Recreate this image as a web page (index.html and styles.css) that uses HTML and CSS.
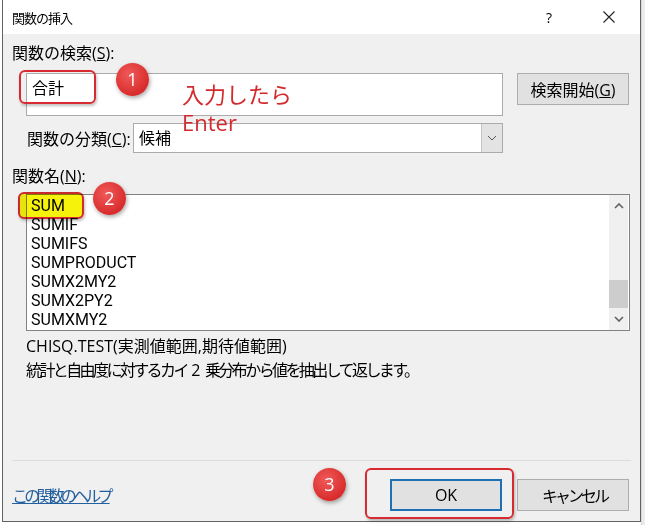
FILE: index.html
```html
<!DOCTYPE html>
<html lang="ja">

<head>
  <meta charset="UTF-8">
  <meta name="viewport" content="width=device-width, initial-scale=1.0">
  <title>関数の挿入</title>
  <link rel="stylesheet" href="styles.css">
</head>

<body>
  <div class="desktop">
    <div class="dialog">
      <div class="titlebar">
        <span class="title">関数の挿入</span>
        <span class="title-btn">?</span>
        <span class="title-btn close">
          <svg width="14" height="14" viewBox="0 0 14 14"><path d="M1.5 1.5L12.5 12.5M12.5 1.5L1.5 12.5" stroke="#222" stroke-width="1.1" fill="none"/></svg>
        </span>
      </div>

      <div class="content">
        <div class="label">関数の検索(<u>S</u>):</div>
        <div class="search-row">
          <div class="textbox">合計</div>
          <button class="btn">検索開始(<u>G</u>)</button>
        </div>

        <div class="category-row">
          <span class="category-label">関数の分類(<u>C</u>):</span>
          <div class="select">
            <span class="select-value">候補</span>
            <span class="select-drop">
              <svg width="10" height="6" viewBox="0 0 10 6"><path d="M1 1L5 5L9 1" stroke="#555" stroke-width="1" fill="none"/></svg>
            </span>
          </div>
        </div>

        <div class="label label-names">関数名(<u>N</u>):</div>
        <div class="listbox">
          <ul class="items">
            <li>SUM</li>
            <li>SUMIF</li>
            <li>SUMIFS</li>
            <li>SUMPRODUCT</li>
            <li>SUMX2MY2</li>
            <li>SUMX2PY2</li>
            <li>SUMXMY2</li>
          </ul>
          <div class="scrollbar">
            <span class="sb-arrow">
              <svg width="10" height="6" viewBox="0 0 10 6"><path d="M1 5L5 1L9 5" stroke="#606060" stroke-width="1.6" fill="none"/></svg>
            </span>
            <div class="sb-track"><div class="sb-thumb"></div></div>
            <span class="sb-arrow">
              <svg width="10" height="6" viewBox="0 0 10 6"><path d="M1 1L5 5L9 1" stroke="#606060" stroke-width="1.6" fill="none"/></svg>
            </span>
          </div>
        </div>

        <div class="desc">
          <p>CHISQ.TEST(実測値範囲,期待値範囲)</p>
          <p class="desc-text">統計と自由度に対するカイ <span class="num">2</span> 乗分布から値を抽出して返します。</p>
        </div>

        <div class="footer">
          <a class="help-link" href="#">この関数のヘルプ</a>
          <button class="btn btn-default">OK</button>
          <button class="btn btn-cancel">キャンセル</button>
        </div>
      </div>
    </div>

    <!-- annotations drawn on top of the screenshot -->
    <div class="mark mark-1"></div>
    <div class="badge badge-1">1</div>
    <div class="note">入力したら<br>Enter</div>
    <div class="mark mark-2"></div>
    <div class="badge badge-2">2</div>
    <div class="badge badge-3">3</div>
    <div class="mark mark-3"></div>
  </div>
</body>

</html>
```

FILE: styles.css
```css
* {
  margin: 0;
  padding: 0;
  box-sizing: border-box;
}

body {
  font-family: "Open Sans", "Noto Sans CJK JP", sans-serif;
  font-size: 16px;
  color: #000;
  background: #f4f4f4;
}

.desktop {
  position: relative;
  width: 645px;
  height: 525px;
  overflow: hidden;
  background: linear-gradient(to right, #fff 641px, #d6d6d6 641px, #d6d6d6 642px, #ececec 642px);
}

.dialog {
  margin-left: 2px;
  width: 639px;
  height: 522px;
  display: flex;
  flex-direction: column;
  background: #f0f0f0;
  border: 1px solid #626262;
  border-top: none;
}

.titlebar {
  height: 34px;
  flex-shrink: 0;
  display: flex;
  align-items: center;
  padding-left: 9px;
  background: #fff;
}

.title {
  flex: 1;
  font-size: 13px;
  letter-spacing: -1px;
}

.title-btn {
  width: 30px;
  text-align: center;
  font-size: 14px;
}

.title-btn + .title-btn {
  margin-left: 30px;
}

.close {
  display: flex;
  justify-content: center;
  margin-right: 16px;
}

.content {
  flex: 1;
  display: flex;
  flex-direction: column;
  padding: 9px 11px 0 9px;
}

.label {
  line-height: 20px;
}

.label-names {
  margin-top: 13px;
}

.search-row {
  display: flex;
  align-items: flex-start;
  gap: 14px;
  margin: 10px 0 0 14px;
}

.textbox {
  width: 477px;
  height: 43px;
  padding: 4px 5px;
  line-height: 20px;
  background: #fff;
  border: 1px solid #ababab;
}

.btn {
  width: 112px;
  height: 32px;
  font: inherit;
  color: #000;
  background: #e1e1e1;
  border: 1px solid #adadad;
}

.btn-default {
  border: 2px solid #1f6fb4;
}

.btn-cancel {
  letter-spacing: -3px;
  padding-left: 3px;
}

.category-row {
  display: flex;
  align-items: center;
  margin-top: 7px;
}

.category-label {
  width: 121px;
  padding-left: 15px;
}

.select {
  width: 370px;
  height: 30px;
  display: flex;
  background: #fff;
  border: 1px solid #ababab;
}

.select-value {
  flex: 1;
  padding-left: 5px;
  line-height: 28px;
}

.select-drop {
  width: 21px;
  display: flex;
  align-items: center;
  justify-content: center;
  background: #e3e3e3;
  border-left: 1px solid #c4c4c4;
}

.listbox {
  width: 604px;
  height: 137px;
  display: flex;
  margin: 8px 0 0 14px;
  background: #fff;
  border: 1px solid #828282;
}

.items {
  flex: 1;
  list-style: none;
  padding: 1px 0 0 4px;
  font-family: Roboto, sans-serif;
  line-height: 19px;
  overflow: hidden;
}

.scrollbar {
  width: 19px;
  margin-right: 1px;
  display: flex;
  flex-direction: column;
  background: #f0f0f0;
}

.sb-arrow {
  height: 22px;
  display: flex;
  align-items: center;
  justify-content: center;
}

.sb-track {
  flex: 1;
  display: flex;
  flex-direction: column;
  justify-content: flex-end;
}

.sb-thumb {
  height: 28px;
  background: #cdcdcd;
}

.desc {
  margin: 3px 0 0 14px;
  line-height: 24px;
}

.desc-text {
  letter-spacing: -2.6px;
}

.num {
  letter-spacing: 0;
  padding: 0 3px;
}

.footer {
  margin-top: auto;
  margin-right: -2px;
  padding: 18px 2px 10px 0;
  display: flex;
  align-items: center;
  gap: 15px;
  border-top: 1px solid #dcdcdc;
}

.help-link {
  margin-right: auto;
  color: #23609f;
  text-decoration: underline;
  letter-spacing: -3.8px;
}

/* red annotations */
.mark {
  position: absolute;
  border: 2px solid #d72b31;
  border-radius: 6px;
  box-shadow: 1px 2px 3px rgba(0, 0, 0, 0.25);
}

.mark-1 {
  left: 19px;
  top: 70px;
  width: 77px;
  height: 34px;
}

.mark-2 {
  left: 18px;
  top: 192px;
  width: 66px;
  height: 27px;
  background: #f7f20c;
  mix-blend-mode: multiply;
}

.mark-3 {
  left: 365px;
  top: 468px;
  width: 149px;
  height: 51px;
}

.badge {
  position: absolute;
  width: 33px;
  height: 33px;
  border-radius: 50%;
  background: radial-gradient(circle at 40% 35%, #f05a5a, #d92c2c 70%, #c42222);
  box-shadow: 1px 2px 4px rgba(0, 0, 0, 0.35);
  color: #fff;
  font-size: 18px;
  line-height: 33px;
  text-align: center;
}

.badge-1 {
  left: 116px;
  top: 63px;
}

.badge-2 {
  left: 93px;
  top: 182px;
}

.badge-3 {
  left: 313px;
  top: 468px;
}

.note {
  position: absolute;
  left: 182px;
  top: 80px;
  color: #d32a2e;
  font-size: 22px;
  line-height: 28px;
}
```
